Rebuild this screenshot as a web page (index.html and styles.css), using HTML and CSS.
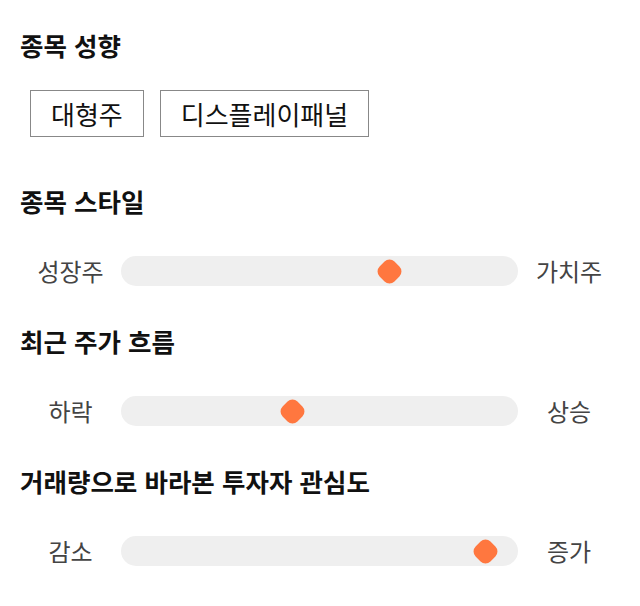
FILE: index.html
```html
<!DOCTYPE html>
<html lang="ko">
<head>
<meta charset="utf-8">
<link rel="stylesheet" href="styles.css">
</head>
<body>
<main class="page">
  <section class="section">
    <h2 class="title">종목 성향</h2>
    <div class="tags">
      <span class="tag">대형주</span>
      <span class="tag">디스플레이패널</span>
    </div>
  </section>
  <section class="section">
    <h2 class="title">종목 스타일</h2>
    <div class="scale">
      <span class="label">성장주</span>
      <div class="track"><span class="thumb" style="left: 67.7%"></span></div>
      <span class="label">가치주</span>
    </div>
  </section>
  <section class="section">
    <h2 class="title">최근 주가 흐름</h2>
    <div class="scale">
      <span class="label">하락</span>
      <div class="track"><span class="thumb" style="left: 43.2%"></span></div>
      <span class="label">상승</span>
    </div>
  </section>
  <section class="section">
    <h2 class="title">거래량으로 바라본 투자자 관심도</h2>
    <div class="scale">
      <span class="label">감소</span>
      <div class="track"><span class="thumb" style="left: 91.9%"></span></div>
      <span class="label">증가</span>
    </div>
  </section>
</main>
</body>
</html>
```
FILE: styles.css
```css
* { box-sizing: border-box; }
html, body { margin: 0; padding: 0; background: #fff; }
body {
  font-family: "Noto Sans CJK KR", "Noto Sans", sans-serif;
  color: #111;
}
.page {
  padding: 32px 20px 0 20px;
  display: flex;
  flex-direction: column;
  gap: 42px;
}
.section {
  display: flex;
  flex-direction: column;
}
.section:first-child + .section { margin-top: 9px; }
.title {
  margin: 0;
  font-size: 25.5px;
  font-weight: 700;
  line-height: 26px;
  height: 30px;
  color: #111;
}
.tags {
  display: flex;
  gap: 16px;
  margin-top: 28px;
  padding-left: 10px;
}
.tag {
  height: 47px;
  line-height: 45px;
  border: 1px solid #888;
  padding: 0 20px;
  font-size: 26px;
  color: #111;
}
.scale {
  display: flex;
  align-items: center;
  margin-top: 38px;
  height: 30px;
}
.label {
  width: 101px;
  flex: none;
  text-align: center;
  font-size: 24px;
  line-height: 30px;
  color: #444;
}
.scale .label:last-child { width: 102px; }
.track {
  flex: 1;
  height: 30px;
  border-radius: 15px;
  background: #efefef;
  position: relative;
}
.thumb {
  position: absolute;
  top: 0;
  width: 30px;
  height: 30px;
  margin-left: -15px;
  display: flex;
  align-items: center;
  justify-content: center;
}
.thumb::before {
  content: "";
  width: 21px;
  height: 21px;
  background: #ff773f;
  border-radius: 7px;
  transform: rotate(45deg);
}
```
